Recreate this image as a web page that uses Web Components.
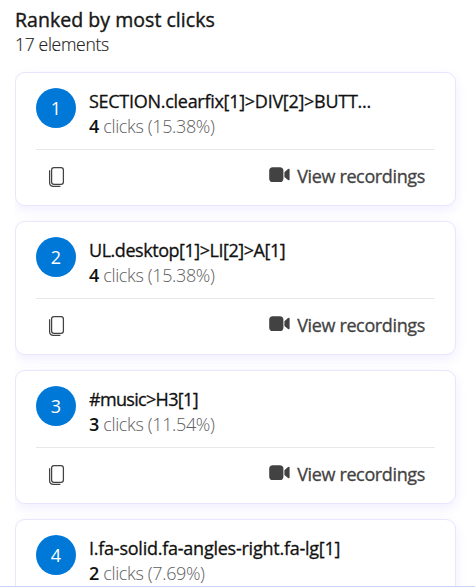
<!DOCTYPE html>
<html lang="en"><head><meta charset="utf-8"><title>Ranked by most clicks</title>
<style>
html,body{margin:0;background:#fff}
body{height:587px;overflow:hidden;font-family:"Open Sans","Noto Sans",sans-serif;color:#171717}
</style></head><body>
<click-panel heading="Ranked by most clicks" count="17 elements">
<click-card rank="1" clicks="4" share="(15.38%)" style="--ls:-.28px">SECTION.clearfix[1]&gt;DIV[2]&gt;BUTT...</click-card>
<click-card rank="2" clicks="4" share="(15.38%)" style="--ls:-.46px">UL.desktop[1]&gt;LI[2]&gt;A[1]</click-card>
<click-card rank="3" clicks="3" share="(11.54%)" style="--ls:-.68px">#music&gt;H3[1]</click-card>
<click-card rank="4" clicks="2" share="(7.69%)" style="--ls:-.24px">I.fa-solid.fa-angles-right.fa-lg[1]</click-card>
</click-panel>
<script>
class CopyIcon extends HTMLElement{
constructor(){super();this.attachShadow({mode:'open'}).innerHTML=`<style>:host{display:block;width:17px;height:22px}svg{display:block}</style>
<svg width="17" height="22" viewBox="0 0 17 22" fill="none" stroke="#424242" stroke-width="1.25"><rect x="3.6" y="1.6" width="11.8" height="16.8" rx="2.4"/><path d="M1.6 4.2V16.6Q1.6 20.4 5.4 20.4H12.4"/></svg>`}}
customElements.define('copy-icon',CopyIcon);
class VideoIcon extends HTMLElement{
constructor(){super();this.attachShadow({mode:'open'}).innerHTML=`<style>:host{display:block;width:21px;height:16px;padding-top:1px}svg{display:block}</style>
<svg width="21" height="16" viewBox="0 0 21 16" fill="#424242"><rect x=".2" y=".2" width="14.2" height="14.8" rx="3.6"/><path d="M15.4 5.2 19 2Q20.6 1 20.6 2.8V12.2Q20.6 14 19 13L15.4 10Z"/></svg>`}}
customElements.define('video-icon',VideoIcon);
class ClickCard extends HTMLElement{
constructor(){super();const a=n=>this.getAttribute(n);this.attachShadow({mode:'open'}).innerHTML=`<style>
:host{display:block;box-sizing:border-box;width:441px;height:134px;padding:15px 20px 0;border:1px solid #e8e6fc;border-radius:10px;background:#fff;box-shadow:0 4px 12px rgba(90,70,255,.09)}
.top{display:flex;gap:13px;height:61px;border-bottom:1px solid #e8e8e8}
.rank{width:40px;height:40px;border-radius:50%;background:#0078d7;color:#fff;font-size:18px;line-height:41px;text-align:center;flex:none}
.text{font-size:18px;line-height:25px;padding-top:1px;white-space:nowrap}
.name{-webkit-text-stroke:.3px;letter-spacing:var(--ls);color:#111}
.stat{color:#606060;font-weight:300;letter-spacing:-.36px}
b{font-weight:600;color:#111}
.actions{display:flex;justify-content:space-between;padding:16px 10px 0 12px}
.view{display:flex;gap:7px;font-size:18px;-webkit-text-stroke:.3px;line-height:20px;letter-spacing:-.36px;color:#424242;white-space:nowrap}
</style><div class="top"><div class="rank">${a('rank')}</div><div class="text"><div class="name"><slot></slot></div><div class="stat"><b>${a('clicks')}</b> clicks ${a('share')}</div></div></div>
<div class="actions"><copy-icon></copy-icon><div class="view"><video-icon></video-icon><span>View recordings</span></div></div>`}}
customElements.define('click-card',ClickCard);
class ClickPanel extends HTMLElement{
constructor(){super();this.attachShadow({mode:'open'}).innerHTML=`<style>
:host{display:block;box-sizing:border-box;height:587px;padding-left:15px;border-bottom:1px solid #ccd6fa;overflow:hidden}
header{height:72px;padding-top:7px;box-sizing:border-box}
h1{margin:0;font-size:19.5px;font-weight:400;-webkit-text-stroke:.4px;line-height:26px;letter-spacing:.04px}
p{margin:0;font-size:17.5px;line-height:23px;font-weight:300;-webkit-text-stroke:.15px;letter-spacing:-.3px;color:#222}
.list{display:grid;gap:15px;height:514px;clip-path:inset(-20px -20px 0 0)}
</style><header><h1>${this.getAttribute('heading')}</h1><p>${this.getAttribute('count')}</p></header><div class="list"><slot></slot></div>`}}
customElements.define('click-panel',ClickPanel);
</script></body></html>
